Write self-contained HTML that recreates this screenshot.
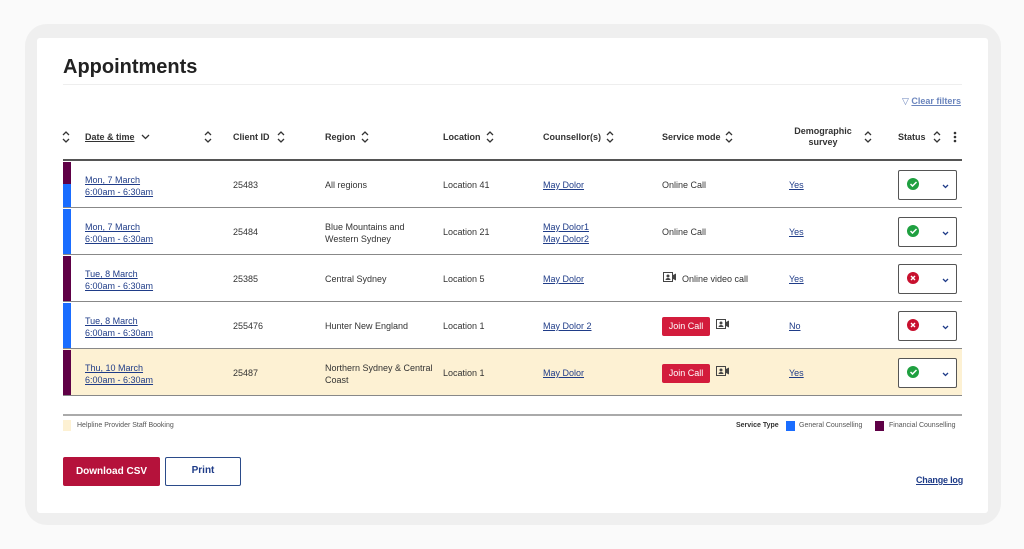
<!DOCTYPE html>
<html><head><meta charset="utf-8"><style>
*{margin:0;padding:0;box-sizing:border-box}
body{width:1024px;height:549px;background:#fafafa;font-family:"Liberation Sans",Arial,sans-serif;color:#333;position:relative;overflow:hidden}
.frame{position:absolute;left:25px;top:24px;width:976px;height:501px;background:#efefef;border-radius:22px}
.card{position:absolute;left:37px;top:38px;width:951px;height:475px;background:#fff;border-radius:3px}
.a{position:absolute;white-space:nowrap}
h1{position:absolute;left:63px;top:56px;font-size:20px;font-weight:bold;color:#222}
.hd{font-size:9px;font-weight:bold;color:#333}
.t{font-size:9px;color:#333}
.l{font-size:9px;color:#1f3c88;text-decoration:underline}
.row{position:absolute;left:63px;width:899px;height:47px;border-bottom:1.5px solid #888}
.bar{position:absolute;left:0;top:1px;width:8px;height:45px}
.st{position:absolute;left:835px;top:9px;width:59px;height:30px;border:1px solid #555;border-radius:2px;background:#fff}
.st .ic{position:absolute;left:8px;top:7px;width:12px;height:12px;border-radius:50%}
.st svg.cv{position:absolute;right:7px;top:13px}
.join{position:absolute;width:48px;height:19px;background:#d31c3c;border-radius:2px;color:#fff;font-size:9px;text-align:center;line-height:19px}
</style></head><body>
<div class="frame"></div>
<div class="card"></div>
<h1>Appointments</h1>
<div class="a" style="left:63px;top:84px;width:899px;height:1px;background:#eee"></div>
<div class="a" style="left:902px;top:96px;font-size:9px;color:#6b85bd">&#9661; <span style="text-decoration:underline;font-weight:bold">Clear filters</span></div>

<svg class="a" style="left:62px;top:131px" width="8" height="12" viewBox="0 0 8 12"><path d="M1 4l3-3 3 3M1 8l3 3 3-3" fill="none" stroke="#333" stroke-width="1.3"/></svg>
<div class="a hd" style="left:85px;top:132px;text-decoration:underline">Date &amp; time</div>
<svg class="a" style="left:141px;top:134px" width="9" height="6"><path d="M1 1l3.5 3.5L8 1" fill="none" stroke="#333" stroke-width="1.3"/></svg>
<svg class="a" style="left:204px;top:131px" width="8" height="12" viewBox="0 0 8 12"><path d="M1 4l3-3 3 3M1 8l3 3 3-3" fill="none" stroke="#333" stroke-width="1.3"/></svg>
<div class="a hd" style="left:233px;top:132px">Client ID</div>
<svg class="a" style="left:277px;top:131px" width="8" height="12" viewBox="0 0 8 12"><path d="M1 4l3-3 3 3M1 8l3 3 3-3" fill="none" stroke="#333" stroke-width="1.3"/></svg>
<div class="a hd" style="left:325px;top:132px">Region</div>
<svg class="a" style="left:361px;top:131px" width="8" height="12" viewBox="0 0 8 12"><path d="M1 4l3-3 3 3M1 8l3 3 3-3" fill="none" stroke="#333" stroke-width="1.3"/></svg>
<div class="a hd" style="left:443px;top:132px">Location</div>
<svg class="a" style="left:486px;top:131px" width="8" height="12" viewBox="0 0 8 12"><path d="M1 4l3-3 3 3M1 8l3 3 3-3" fill="none" stroke="#333" stroke-width="1.3"/></svg>
<div class="a hd" style="left:543px;top:132px">Counsellor(s)</div>
<svg class="a" style="left:606px;top:131px" width="8" height="12" viewBox="0 0 8 12"><path d="M1 4l3-3 3 3M1 8l3 3 3-3" fill="none" stroke="#333" stroke-width="1.3"/></svg>
<div class="a hd" style="left:662px;top:132px">Service mode</div>
<svg class="a" style="left:725px;top:131px" width="8" height="12" viewBox="0 0 8 12"><path d="M1 4l3-3 3 3M1 8l3 3 3-3" fill="none" stroke="#333" stroke-width="1.3"/></svg>
<div class="a hd" style="left:790px;top:126px;text-align:center;width:66px;line-height:11px;white-space:normal">Demographic survey</div>
<svg class="a" style="left:864px;top:131px" width="8" height="12" viewBox="0 0 8 12"><path d="M1 4l3-3 3 3M1 8l3 3 3-3" fill="none" stroke="#333" stroke-width="1.3"/></svg>
<div class="a hd" style="left:898px;top:132px">Status</div>
<svg class="a" style="left:933px;top:131px" width="8" height="12" viewBox="0 0 8 12"><path d="M1 4l3-3 3 3M1 8l3 3 3-3" fill="none" stroke="#333" stroke-width="1.3"/></svg>
<svg class="a" style="left:953px;top:131px" width="4" height="12"><circle cx="2" cy="2" r="1.3" fill="#333"/><circle cx="2" cy="6" r="1.3" fill="#333"/><circle cx="2" cy="10" r="1.3" fill="#333"/></svg>

<div class="a" style="left:63px;top:159px;width:899px;height:2px;background:#555"></div>

<!-- row1 -->
<div class="row" style="top:161px">
 <div class="bar" style="background:#5f0046;height:22px"></div><div class="bar" style="background:#1a6dff;top:23px;height:23px"></div>
 <div class="a l" style="left:22px;top:13px;line-height:12px">Mon, 7 March<br>6:00am - 6:30am</div>
 <div class="a t" style="left:170px;top:19px">25483</div>
 <div class="a t" style="left:262px;top:19px">All regions</div>
 <div class="a t" style="left:380px;top:19px">Location 41</div>
 <div class="a l" style="left:480px;top:19px">May Dolor</div>
 <div class="a t" style="left:599px;top:19px">Online Call</div>
 <div class="a l" style="left:726px;top:19px">Yes</div>
 <div class="st"><div class="ic" style="background:#1fa040"></div><svg class="a" style="left:11px;top:10px" width="7" height="6"><path d="M0.5 3l2 2 4-4" fill="none" stroke="#fff" stroke-width="1.5"/></svg><svg class="cv" width="7" height="5"><path d="M1 1l2.5 2.5L6 1" fill="none" stroke="#1f3c88" stroke-width="1.3"/></svg></div>
</div>
<!-- row2 -->
<div class="row" style="top:208px">
 <div class="bar" style="background:#1a6dff"></div>
 <div class="a l" style="left:22px;top:13px;line-height:12px">Mon, 7 March<br>6:00am - 6:30am</div>
 <div class="a t" style="left:170px;top:19px">25484</div>
 <div class="a t" style="left:262px;top:13px;line-height:12px">Blue Mountains and<br>Western Sydney</div>
 <div class="a t" style="left:380px;top:19px">Location 21</div>
 <div class="a l" style="left:480px;top:13px;line-height:12px">May Dolor1<br>May Dolor2</div>
 <div class="a t" style="left:599px;top:19px">Online Call</div>
 <div class="a l" style="left:726px;top:19px">Yes</div>
 <div class="st"><div class="ic" style="background:#1fa040"></div><svg class="a" style="left:11px;top:10px" width="7" height="6"><path d="M0.5 3l2 2 4-4" fill="none" stroke="#fff" stroke-width="1.5"/></svg><svg class="cv" width="7" height="5"><path d="M1 1l2.5 2.5L6 1" fill="none" stroke="#1f3c88" stroke-width="1.3"/></svg></div>
</div>
<!-- row3 -->
<div class="row" style="top:255px">
 <div class="bar" style="background:#5f0046"></div>
 <div class="a l" style="left:22px;top:13px;line-height:12px">Tue, 8 March<br>6:00am - 6:30am</div>
 <div class="a t" style="left:170px;top:19px">25385</div>
 <div class="a t" style="left:262px;top:19px">Central Sydney</div>
 <div class="a t" style="left:380px;top:19px">Location 5</div>
 <div class="a l" style="left:480px;top:19px">May Dolor</div>
 <svg class="a" style="left:600px;top:17px" width="14" height="10"><rect x="0.5" y="0.5" width="9" height="9" fill="none" stroke="#444"/><circle cx="5" cy="4" r="1.5" fill="#444"/><path d="M2.5 8a2.5 2 0 0 1 5 0z" fill="#444"/><path d="M10 3l3-1.5v7L10 7z" fill="#444"/></svg>
 <div class="a t" style="left:619px;top:19px">Online video call</div>
 <div class="a l" style="left:726px;top:19px">Yes</div>
 <div class="st"><div class="ic" style="background:#c8102e"></div><svg class="a" style="left:11px;top:10px" width="6" height="6"><path d="M1 1l4 4M5 1l-4 4" stroke="#fff" stroke-width="1.4"/></svg><svg class="cv" width="7" height="5"><path d="M1 1l2.5 2.5L6 1" fill="none" stroke="#1f3c88" stroke-width="1.3"/></svg></div>
</div>
<!-- row4 -->
<div class="row" style="top:302px">
 <div class="bar" style="background:#1a6dff"></div>
 <div class="a l" style="left:22px;top:13px;line-height:12px">Tue, 8 March<br>6:00am - 6:30am</div>
 <div class="a t" style="left:170px;top:19px">255476</div>
 <div class="a t" style="left:262px;top:19px">Hunter New England</div>
 <div class="a t" style="left:380px;top:19px">Location 1</div>
 <div class="a l" style="left:480px;top:19px">May Dolor 2</div>
 <div class="join" style="left:599px;top:15px">Join Call</div>
 <svg class="a" style="left:653px;top:17px" width="14" height="10"><rect x="0.5" y="0.5" width="9" height="9" fill="none" stroke="#444"/><circle cx="5" cy="4" r="1.5" fill="#444"/><path d="M2.5 8a2.5 2 0 0 1 5 0z" fill="#444"/><path d="M10 3l3-1.5v7L10 7z" fill="#444"/></svg>
 <div class="a l" style="left:726px;top:19px">No</div>
 <div class="st"><div class="ic" style="background:#c8102e"></div><svg class="a" style="left:11px;top:10px" width="6" height="6"><path d="M1 1l4 4M5 1l-4 4" stroke="#fff" stroke-width="1.4"/></svg><svg class="cv" width="7" height="5"><path d="M1 1l2.5 2.5L6 1" fill="none" stroke="#1f3c88" stroke-width="1.3"/></svg></div>
</div>
<!-- row5 -->
<div class="row" style="top:349px;background:#fdf1d3">
 <div class="bar" style="background:#5f0046"></div>
 <div class="a l" style="left:22px;top:13px;line-height:12px">Thu, 10 March<br>6:00am - 6:30am</div>
 <div class="a t" style="left:170px;top:19px">25487</div>
 <div class="a t" style="left:262px;top:13px;line-height:12px">Northern Sydney &amp; Central<br>Coast</div>
 <div class="a t" style="left:380px;top:19px">Location 1</div>
 <div class="a l" style="left:480px;top:19px">May Dolor</div>
 <div class="join" style="left:599px;top:15px">Join Call</div>
 <svg class="a" style="left:653px;top:17px" width="14" height="10"><rect x="0.5" y="0.5" width="9" height="9" fill="none" stroke="#444"/><circle cx="5" cy="4" r="1.5" fill="#444"/><path d="M2.5 8a2.5 2 0 0 1 5 0z" fill="#444"/><path d="M10 3l3-1.5v7L10 7z" fill="#444"/></svg>
 <div class="a l" style="left:726px;top:19px">Yes</div>
 <div class="st"><div class="ic" style="background:#1fa040"></div><svg class="a" style="left:11px;top:10px" width="7" height="6"><path d="M0.5 3l2 2 4-4" fill="none" stroke="#fff" stroke-width="1.5"/></svg><svg class="cv" width="7" height="5"><path d="M1 1l2.5 2.5L6 1" fill="none" stroke="#1f3c88" stroke-width="1.3"/></svg></div>
</div>

<div class="a" style="left:63px;top:414px;width:899px;height:2px;background:#aaa"></div>
<div class="a" style="left:63px;top:420px;width:8px;height:11px;background:#fdf1d3"></div>
<div class="a" style="left:77px;top:422px;font-size:7px;color:#555">Helpline Provider Staff Booking</div>
<div class="a" style="left:736px;top:422px;font-size:7px;color:#333;font-weight:bold">Service Type</div>
<div class="a" style="left:786px;top:421px;width:9px;height:10px;background:#1a6dff"></div>
<div class="a" style="left:799px;top:422px;font-size:7px;color:#555">General Counselling</div>
<div class="a" style="left:875px;top:421px;width:9px;height:10px;background:#5f0046"></div>
<div class="a" style="left:889px;top:422px;font-size:7px;color:#555">Financial Counselling</div>

<div class="a" style="left:63px;top:457px;width:97px;height:29px;background:#b5123b;border-radius:2px;color:#fff;font-size:10px;font-weight:bold;text-align:center;line-height:29px">Download CSV</div>
<div class="a" style="left:165px;top:457px;width:76px;height:29px;border:1.5px solid #2b4b8a;border-radius:2px;color:#1f3c88;font-size:10px;font-weight:bold;text-align:center;line-height:26px">Print</div>
<div class="a" style="left:916px;top:475px;font-size:9px;font-weight:bold;color:#1f3c88;text-decoration:underline;letter-spacing:-0.2px">Change log</div>
</body></html>
